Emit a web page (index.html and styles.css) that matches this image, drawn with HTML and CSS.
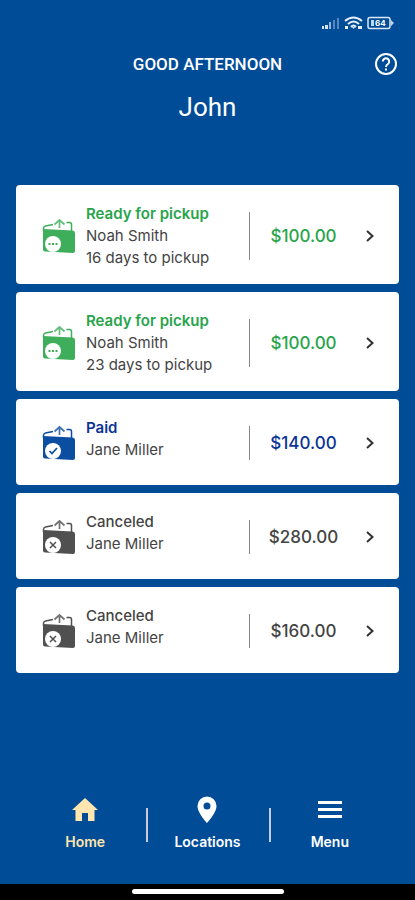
FILE: index.html
```html
<!DOCTYPE html>
<html lang="en">
<head>
<meta charset="utf-8">
<meta name="viewport" content="width=device-width, initial-scale=1">
<title>Transfers</title>
<link rel="stylesheet" href="styles.css">
</head>
<body>
<svg class="defs" aria-hidden="true">
  <symbol id="wallet" viewBox="0 0 34 36">
    <path d="M1.500 13V10.500Q1.500 8.500 3.500 8L11 6.500M24.500 4.500H27.500Q29.500 4.500 29.500 6.500V13" fill="none" stroke="currentColor" stroke-width="1.500"/>
    <path d="M12.500 6.500L17.500 2L22.500 6.500M17.500 2.500V10" fill="none" stroke="currentColor" stroke-width="1.700" opacity=".8"/>
    <path d="M1 11L30.500 12.500Q33 12.700 33 15V33Q33 35 31 35L3 33.500Q1 33.500 1 31.500Z" fill="currentColor"/>
    <circle cx="11" cy="26" r="8" fill="#fff"/>
  </symbol>
  <symbol id="chevron" viewBox="0 0 10 14">
    <path d="M2 2L7.500 7L2 12" fill="none" stroke="currentColor" stroke-width="2"/>
  </symbol>
</svg>
<div class="screen">
  <div class="status">
    <svg width="74" height="16" viewBox="0 0 74 16" role="img" aria-label="Signal, Wi-Fi, battery 64">
      <g fill="#d4e2f4"><path d="M1 14V11H3V14ZM4 14V10H7V14Z"/><path d="M8 14V7H10V14Z" opacity=".7"/><path d="M12 14V5H14V14ZM16 14V3H18V14Z" opacity=".4"/></g>
      <g fill="none" stroke="#e6eefa" stroke-width="2"><path d="M24 6Q32.500 -1 41 6M27 9Q32.500 4 38 9M30 12Q32.500 9 35 12"/></g>
      <path d="M31 12H34L32.500 14ZM24 11H27V14H24ZM37 11H41V14H37Z" fill="#e6eefa"/>
      <rect x="47" y="2.500" width="22" height="11" rx="2" fill="none" stroke="#dce8f7" stroke-width="1.500"/>
      <path d="M50 5H53V11H50ZM70 5L73 8L70 11Z" fill="#bfd4ed"/>
      <text x="54" y="11" class="charge">64</text>
    </svg>
  </div>
  <header class="header">
    <p class="greeting">GOOD AFTERNOON</p>
    <button class="help" type="button" aria-label="Help">
      <svg width="24" height="24" viewBox="0 0 24 24" fill="none" stroke="#fff" stroke-width="2"><circle cx="12" cy="12" r="10"/><path d="M8.800 9.500A3.200 3.200 0 1 1 14.500 11.500Q12 13 12 15M12 16.500V18.500"/></svg>
    </button>
    <h1 class="name">John</h1>
  </header>
  <main class="cards">
    <a class="card ready" href="#">
      <svg class="wallet" viewBox="0 0 34 36"><use href="#wallet"/><path d="M6.500 25H8.500V27H6.500ZM10 25H12V27H10ZM13.500 25H15.500V27H13.500Z" fill="currentColor"/></svg>
      <div class="info"><p class="state">Ready for pickup</p><p>Noah Smith</p><p>16 days to pickup</p></div>
      <span class="amount">$100.00</span>
      <svg class="chevron"><use href="#chevron"/></svg>
    </a>
    <a class="card ready" href="#">
      <svg class="wallet" viewBox="0 0 34 36"><use href="#wallet"/><path d="M6.500 25H8.500V27H6.500ZM10 25H12V27H10ZM13.500 25H15.500V27H13.500Z" fill="currentColor"/></svg>
      <div class="info"><p class="state">Ready for pickup</p><p>Noah Smith</p><p>23 days to pickup</p></div>
      <span class="amount">$100.00</span>
      <svg class="chevron"><use href="#chevron"/></svg>
    </a>
    <a class="card paid" href="#">
      <svg class="wallet" viewBox="0 0 34 36"><use href="#wallet"/><path d="M7.500 26L10 28.500L15 23" fill="none" stroke="currentColor" stroke-width="1.700"/></svg>
      <div class="info"><p class="state">Paid</p><p>Jane Miller</p></div>
      <span class="amount">$140.00</span>
      <svg class="chevron"><use href="#chevron"/></svg>
    </a>
    <a class="card canceled" href="#">
      <svg class="wallet" viewBox="0 0 34 36"><use href="#wallet"/><path d="M8 23L14 29M14 23L8 29" stroke="currentColor" stroke-width="1.500"/></svg>
      <div class="info"><p class="state">Canceled</p><p>Jane Miller</p></div>
      <span class="amount">$280.00</span>
      <svg class="chevron"><use href="#chevron"/></svg>
    </a>
    <a class="card canceled" href="#">
      <svg class="wallet" viewBox="0 0 34 36"><use href="#wallet"/><path d="M8 23L14 29M14 23L8 29" stroke="currentColor" stroke-width="1.500"/></svg>
      <div class="info"><p class="state">Canceled</p><p>Jane Miller</p></div>
      <span class="amount">$160.00</span>
      <svg class="chevron"><use href="#chevron"/></svg>
    </a>
  </main>
  <nav class="tabs">
    <a class="tab active" href="#">
      <svg width="32" height="32" viewBox="0 0 32 32" fill="currentColor"><path d="M16 4L29 16H25.500V27H19V19H13V27H6.500V16H3Z"/></svg>
      Home
    </a>
    <a class="tab" href="#">
      <svg width="32" height="32" viewBox="0 0 32 32" fill="currentColor"><path fill-rule="evenodd" d="M16 2.500A9.500 9.500 0 0 0 6.500 12C6.500 19 16 29 16 29S25.500 19 25.500 12A9.500 9.500 0 0 0 16 2.500ZM16 8.500A3.500 3.500 0 1 1 16 15.500A3.500 3.500 0 0 1 16 8.500Z"/></svg>
      Locations
    </a>
    <a class="tab" href="#">
      <svg width="32" height="32" viewBox="0 0 32 32" fill="currentColor"><path d="M4 7H28V10H4ZM4 14H28V17H4ZM4 21H28V24H4Z"/></svg>
      Menu
    </a>
  </nav>
  <div class="gesture"><span></span></div>
</div>
</body>
</html>
```
FILE: styles.css
```css
* {
  box-sizing: border-box;
}

body {
  margin: 0;
  background: #004c97;
  font-family: Inter, sans-serif;
}

p,
h1 {
  margin: 0;
}

a {
  color: inherit;
  text-decoration: none;
}

.defs {
  position: absolute;
  width: 0;
  height: 0;
}

.screen {
  display: flex;
  flex-direction: column;
  min-height: 100vh;
}

.status {
  display: flex;
  justify-content: flex-end;
  padding: 15px 20px 0 0;
  height: 48px;
}

.charge {
  fill: #fff;
  font-size: 8px;
  font-weight: 700;
}

.header {
  display: grid;
  grid-template-columns: 24px 1fr 24px;
  align-items: center;
  row-gap: 11px;
  padding: 0 17px;
  color: #fff;
  text-align: center;
}

.greeting {
  grid-column: 2;
  font: 500 17px/32px Roboto, sans-serif;
}

.help {
  width: 24px;
  height: 24px;
  padding: 0;
  border: 0;
  background: none;
}

.help svg {
  display: block;
}

.name {
  grid-column: 1 / -1;
  font: 400 26px/32px Roboto, sans-serif;
}

.cards {
  display: grid;
  gap: 8px;
  margin: 62px 16px 0;
}

.card {
  display: grid;
  grid-template-columns: 36px 1fr 108px 10px;
  align-items: center;
  column-gap: 8px;
  min-height: 86px;
  padding: 17px 24px 15px 26px;
  border-radius: 4px;
  background: #fff;
  color: #444;
}

.wallet {
  width: 34px;
  height: 36px;
}

.info {
  align-self: start;
  padding-top: 1px;
  font-size: 15px;
  line-height: 22px;
}

.state {
  font-weight: 500;
}

.amount {
  display: flex;
  align-items: center;
  justify-content: center;
  height: 34px;
  border-left: 1px solid #888;
  font-size: 17px;
  font-weight: 500;
}

.ready .amount {
  height: 48px;
}

.chevron {
  width: 10px;
  height: 14px;
  color: #333;
}

.ready .wallet {
  color: #3eae5b;
}

.ready .state,
.ready .amount {
  color: #28a44b;
}

.ready .state,
.paid .state {
  font-weight: 600;
}

.paid .wallet {
  color: #0b4da0;
}

.paid .state,
.paid .amount {
  color: #0b3494;
}

.canceled .wallet {
  color: #505050;
}

.tabs {
  display: grid;
  grid-template-columns: repeat(3, 1fr);
  margin: auto 24px 31px;
}

.tab {
  display: flex;
  flex-direction: column;
  align-items: center;
  gap: 5px;
  color: #fff;
  font-size: 14px;
  font-weight: 600;
  line-height: 22px;
}

.tab + .tab {
  background: linear-gradient(#c5cbe0, #c5cbe0) 0 14px / 2px 34px no-repeat;
}

.tab.active {
  color: #ffe5ae;
}

.gesture {
  display: flex;
  justify-content: center;
  height: 16px;
  padding-top: 5px;
  background: #000;
}

.gesture span {
  width: 152px;
  height: 5px;
  border-radius: 3px;
  background: #fff;
}
```
